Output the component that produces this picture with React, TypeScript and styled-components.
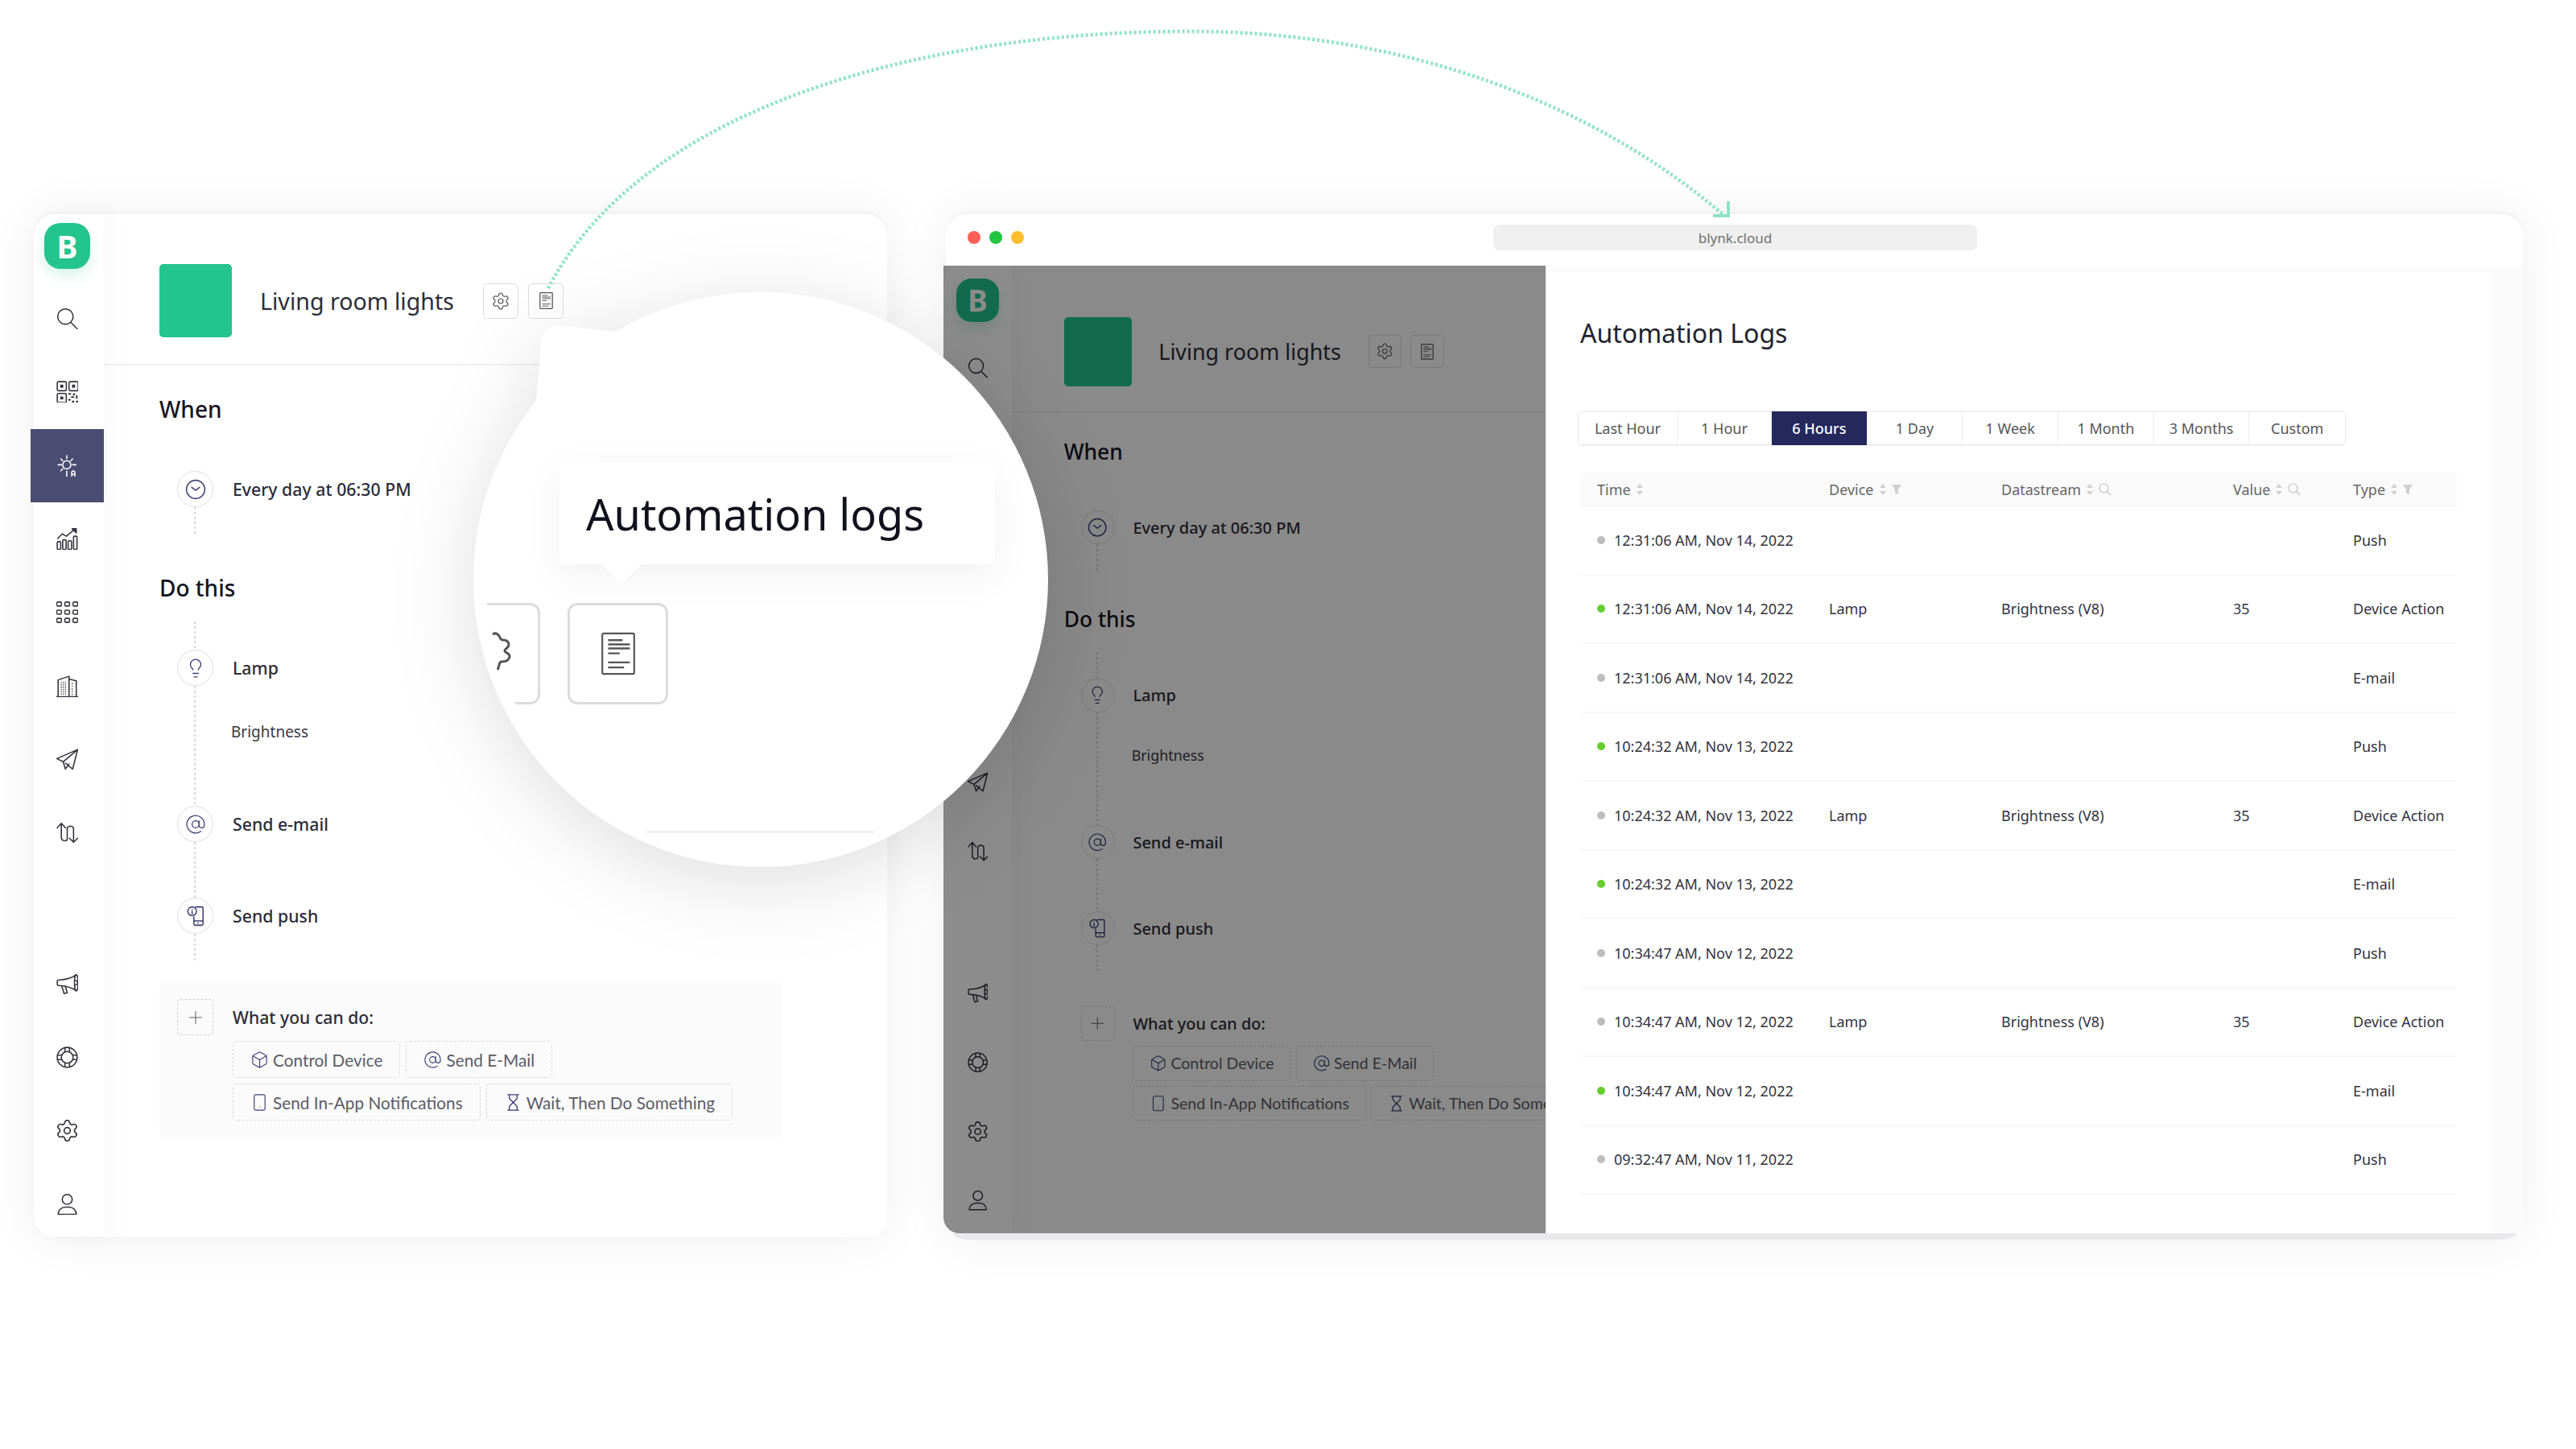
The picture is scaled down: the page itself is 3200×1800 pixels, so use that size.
import React from 'react'
import styled, { createGlobalStyle, ThemeProvider } from 'styled-components'
import { AtSign, Box, Hourglass, Lightbulb, Plus, Settings, Smartphone } from 'lucide-react'

type ViewTheme = { u: number; sideW: number; rowShift: number; logoTop: number; sideHead: number; headTop: number; bodyTop: number }

const fullView: ViewTheme = { u: 1, sideW: 87, rowShift: 4, logoTop: 11, sideHead: 84, headTop: 62, bodyTop: 37 }
const dimView: ViewTheme = { u: 0.94, sideW: 85, rowShift: 0, logoTop: 16, sideHead: 84, headTop: 64, bodyTop: 33 }

const u = (n: number) => ({ theme }: { theme: ViewTheme }) => `${n * theme.u}px`

const FONT = `"Noto Sans", "Open Sans", sans-serif`
const CHIP_FONT = `Lato, "Noto Sans", sans-serif`

const GlobalStyle = createGlobalStyle`
  html, body {
    margin: 0;
    background: #fff;
  }
  * {
    box-sizing: border-box;
  }
`

const Stage = styled.div`
  position: relative;
  width: 3200px;
  height: 1800px;
  padding: 266px 0 0 42px;
  display: flex;
  gap: 73px;
  overflow: hidden;
  font-family: ${FONT};
  color: #2c2c38;
`

const Card = styled.div`
  width: 1060px;
  height: 1270px;
  background: #fff;
  border-radius: 26px;
  box-shadow: 0 -3px 0 #f3f3f3, 0 0 60px rgba(0, 0, 0, 0.07);
`

// shared automation page, drawn twice at two scales
const View = styled.div`
  display: flex;
  height: 100%;
`

const Sidebar = styled.nav`
  flex: none;
  width: ${({ theme }) => theme.sideW}px;
  background: #fff;
  border-radius: 26px 0 0 26px;
  box-shadow: 8px 0 30px rgba(0, 0, 0, 0.03);
  display: flex;
  flex-direction: column;
  position: relative;
`

const LogoSlot = styled.div`
  flex: none;
  height: ${({ theme }) => theme.sideHead}px;
  padding-top: ${({ theme }) => theme.logoTop}px;
  margin-left: ${({ theme }) => -theme.rowShift}px;
  display: flex;
  justify-content: center;
`

const Logo = styled.div`
  width: ${u(57)};
  height: ${u(57)};
  border-radius: ${u(20)};
  background: #24c48e;
  box-shadow: 0 8px 16px rgba(36, 196, 142, 0.18);
  color: #fff;
  font-size: ${u(39)};
  font-weight: 700;
  display: flex;
  align-items: center;
  justify-content: center;
`

const NavRow = styled.div<{ $active?: boolean; $gap?: number }>`
  flex: none;
  height: ${u(91.3)};
  margin-left: ${({ theme }) => -theme.rowShift}px;
  margin-top: ${({ $gap, theme }) => ($gap || 0) * theme.u}px;
  background: ${({ $active }) => ($active ? '#4a4c72' : 'transparent')};
  color: ${({ $active }) => ($active ? '#fff' : '#33333c')};
  display: flex;
  align-items: center;
  justify-content: center;
  svg {
    width: ${u(27)};
    height: ${u(27)};
  }
`

const Main = styled.div`
  flex: 1;
  min-width: 0;
  overflow: hidden;
`

const PageHead = styled.header`
  display: flex;
  align-items: center;
  padding: ${({ theme }) => theme.headTop}px 0 ${u(33)} ${u(69)};
  border-bottom: 2px solid #f1f1f1;
`

const Swatch = styled.div`
  width: ${u(90)};
  height: ${u(91)};
  border-radius: ${u(5)};
  background: #24c48e;
`

const PageTitle = styled.h1`
  margin: 0 ${u(36)} 0 ${u(35)};
  font-size: ${u(28.6)};
  font-weight: 400;
  white-space: nowrap;
  color: #2c2c38;
`

const IconBtn = styled.div`
  width: ${u(44)};
  height: ${u(44)};
  margin-right: ${u(12)};
  border: 1px solid #dcdcdc;
  border-radius: ${u(5)};
  color: #555;
  display: flex;
  align-items: center;
  justify-content: center;
`

const GearMark = styled(Settings)`
  width: ${u(24)};
  height: ${u(24)};
`

const DocMark = styled.svg`
  width: ${u(17)};
  height: ${u(21)};
`

const Body = styled.div`
  padding: ${({ theme }) => theme.bodyTop}px 0 0 ${u(69)};
`

const SectionTitle = styled.h2<{ $top?: number; $bottom?: number }>`
  margin: ${({ $top, theme }) => ($top || 0) * theme.u}px 0 ${({ $bottom, theme }) => ($bottom || 0) * theme.u}px;
  height: ${u(34)};
  line-height: ${u(34)};
  font-size: ${u(28)};
  font-weight: 500;
  color: #15151f;
`

const Step = styled.div`
  height: ${u(45)};
  padding-left: ${u(22)};
  display: flex;
  align-items: center;
  gap: ${u(24)};
`

const StepIcon = styled.div`
  flex: none;
  width: ${u(45)};
  height: ${u(45)};
  border-radius: 50%;
  border: 1px solid #dedede;
  color: #3c3f75;
  display: flex;
  align-items: center;
  justify-content: center;
  svg {
    width: ${u(26)};
    height: ${u(26)};
  }
`

const StepLabel = styled.span`
  font-size: ${u(21.3)};
  font-weight: 500;
  color: #2c2c38;
  white-space: nowrap;
`

const Connector = styled.div<{ $h: number }>`
  width: 2px;
  height: ${({ $h, theme }) => $h * theme.u}px;
  margin-left: ${u(43)};
  background: repeating-linear-gradient(to bottom, #d6d6d6 0 3px, transparent 3px 6px);
`

const SubRow = styled.div`
  display: flex;
`

const SubLabel = styled.span`
  margin: ${u(43)} 0 0 ${u(44)};
  height: ${u(28)};
  line-height: ${u(28)};
  font-size: ${u(19)};
  color: #3a3a44;
`

const Panel = styled.section`
  width: ${u(774)};
  height: ${u(198)};
  margin-top: ${u(24)};
  padding: ${u(23)} 0 0 ${u(22)};
  border-radius: ${u(10)};
  background: #fbfbfb;
`

const PanelHead = styled.div`
  display: flex;
  align-items: center;
  gap: ${u(24)};
`

const PlusBox = styled.div`
  width: ${u(45)};
  height: ${u(45)};
  border: 1px dashed #cfcfcf;
  border-radius: ${u(4)};
  color: #666;
  display: flex;
  align-items: center;
  justify-content: center;
  svg {
    width: ${u(26)};
    height: ${u(26)};
  }
`

const PanelTitle = styled.span`
  font-size: ${u(21.2)};
  font-weight: 500;
  color: #2c2c38;
`

const ChipRow = styled.div`
  display: flex;
  gap: ${u(7)};
  margin: ${u(7)} 0 0 ${u(69)};
  &:first-of-type {
    margin-top: ${u(15)};
  }
`

const Chip = styled.div`
  flex: none;
  height: ${u(46)};
  padding: 0 ${u(21)};
  border: 1px dashed #d8d8d8;
  border-radius: ${u(5)};
  display: flex;
  align-items: center;
  gap: ${u(5)};
  font-family: ${CHIP_FONT};
  font-size: ${u(20.8)};
  color: #5c5c66;
  white-space: nowrap;
  svg {
    color: #3c3f75;
    width: ${u(23)};
    height: ${u(23)};
  }
`

// browser window
const BrowserCard = styled.div`
  width: 1959px;
  height: 1274px;
  background: linear-gradient(to bottom, #fbfbfb calc(100% - 8px), #e9e9eb calc(100% - 8px));
  border-radius: 26px;
  box-shadow: 0 -3px 0 #f3f3f3, 0 0 60px rgba(0, 0, 0, 0.07);
  display: flex;
  flex-direction: column;
`

const TitleBar = styled.div`
  height: 64px;
  flex: none;
  padding: 0 0 6px 27px;
  background: #fff;
  border-radius: 26px 26px 0 0;
  position: relative;
  display: flex;
  align-items: center;
`

const WinDot = styled.span<{ $c: string }>`
  width: 16px;
  height: 16px;
  margin-right: 11px;
  border-radius: 50%;
  background: ${({ $c }) => $c};
`

const UrlBar = styled.div`
  margin-left: 572px;
  width: 601px;
  height: 32px;
  border-radius: 8px;
  background: #efefef;
  color: #6f6f6f;
  font-size: 17px;
  display: flex;
  align-items: center;
  justify-content: center;
`

const BrowserBody = styled.div`
  height: 1202px;
  flex: none;
  display: flex;
`

const DimScreen = styled.div`
  position: relative;
  flex: none;
  width: 748px;
  margin-left: -3px;
  overflow: hidden;
  border-radius: 0 0 0 20px;
`

const DimOverlay = styled.div`
  position: absolute;
  inset: 0;
  background: rgba(0, 0, 0, 0.45);
`

const LogPanel = styled.div`
  flex: none;
  width: 1175px;
  padding: 54px 0 0 43px;
  background: #fff;
  border-top: 8px solid #fafafa;
`

const LogTitle = styled.h2`
  margin: 0 0 75px;
  height: 44px;
  line-height: 44px;
  font-size: 32px;
  font-weight: 400;
  color: #23232d;
`

const Tabs = styled.div`
  display: inline-flex;
  margin-left: -3px;
  height: 42px;
  border: 1px solid #e7e7e7;
  border-radius: 4px;
  box-shadow: 0 1px 2px rgba(0, 0, 0, 0.05);
`

const Tab = styled.div<{ $active?: boolean; $w: number }>`
  width: ${({ $w }) => $w}px;
  margin: ${({ $active }) => ($active ? '-1px 0' : '0')};
  background: ${({ $active }) => ($active ? '#24285c' : '#fff')};
  color: ${({ $active }) => ($active ? '#fff' : '#555')};
  font-weight: ${({ $active }) => ($active ? 500 : 400)};
  font-size: 18px;
  border-right: 1px solid #ececec;
  display: flex;
  align-items: center;
  justify-content: center;
  white-space: nowrap;
  &:last-child {
    border-right: 0;
  }
`

const Table = styled.div`
  width: 1089px;
  margin-top: 34px;
  font-size: 18px;
`

const cols = '288px 214px 288px 149px 129px'

const TableHead = styled.div`
  display: grid;
  grid-template-columns: ${cols};
  height: 42px;
  padding-left: 21px;
  align-items: center;
  background: #fafafa;
  border-bottom: 1px solid #f1f1f1;
  color: #666;
`

const HeadCell = styled.span`
  display: flex;
  align-items: center;
  gap: 6px;
  svg {
    flex: none;
  }
`

const LogRow = styled.div`
  display: grid;
  grid-template-columns: ${cols};
  height: 85.5px;
  padding-left: 21px;
  align-items: center;
  border-bottom: 2px solid #f7f7f7;
  color: #33333d;
  white-space: nowrap;
`

const TimeCell = styled.span`
  display: flex;
  align-items: center;
  gap: 11px;
`

const StatusDot = styled.span<{ $on?: boolean }>`
  width: 10px;
  height: 10px;
  border-radius: 50%;
  background: ${({ $on }) => ($on ? '#66cf2e' : '#bdbdbd')};
`

// magnifier that lies over both windows
const Lens = styled.div`
  position: absolute;
  left: 588px;
  top: 363px;
  width: 714px;
  height: 714px;
  filter: drop-shadow(0 18px 50px rgba(0, 0, 0, 0.13));
`

const LensDisc = styled.div`
  position: absolute;
  inset: 0;
  border-radius: 50%;
  background: #fff;
  overflow: hidden;
`

const LensTail = styled.svg`
  position: absolute;
  left: 70px;
  top: 36px;
`

const Bubble = styled.div`
  position: absolute;
  left: 107px;
  top: 211px;
  width: 541px;
  height: 127px;
  padding-left: 33px;
  border-radius: 6px;
  background: #fff;
  box-shadow: 0 14px 50px rgba(0, 0, 0, 0.06);
  font-size: 54px;
  color: #11111d;
  display: flex;
  align-items: center;
  &::after {
    content: '';
    position: absolute;
    left: 52px;
    bottom: -24px;
    border-left: 25px solid transparent;
    border-right: 25px solid transparent;
    border-top: 24px solid #fff;
  }
`

const BigBtn = styled.div`
  position: absolute;
  left: 117px;
  top: 386px;
  width: 125px;
  height: 126px;
  border: 3px solid #dcdcdc;
  border-radius: 12px;
  color: #555;
  display: flex;
  align-items: center;
  justify-content: center;
`

const CutBtn = styled.div`
  position: absolute;
  left: 17px;
  top: 386px;
  width: 66px;
  height: 126px;
  border: 3px solid #dcdcdc;
  border-left: 0;
  border-radius: 0 12px 12px 0;
  color: #555;
  clip-path: polygon(0 0, 100% 0, 100% 100%, 36px 100%, 0 60%);
`

const CutIcon = styled.svg`
  position: absolute;
  left: 5px;
  top: 33px;
`

const LensLine = styled.div`
  position: absolute;
  left: 215px;
  top: 669px;
  width: 283px;
  height: 3px;
  background: #f0f0f0;
`

const Arc = styled.svg`
  position: absolute;
  left: 0;
  top: 0;
  pointer-events: none;
`

const line = { fill: 'none', stroke: 'currentColor', strokeWidth: 1.4, strokeLinecap: 'round', strokeLinejoin: 'round' } as const

const SearchIcon = () => (
  <svg viewBox="0 0 24 24" {...line}>
    <circle cx="10" cy="10" r="8.500" />
    <path d="M16 16.500L23 23.500" />
  </svg>
)

const QrIcon = () => (
  <svg viewBox="0 0 24 24" {...line}>
    <rect x="1" y="1" width="10" height="10" rx="1.500" />
    <rect x="14" y="1" width="10" height="10" rx="1.500" />
    <rect x="1" y="14" width="10" height="10" rx="1.500" />
    <rect x="5" y="5" width="2" height="2" fill="currentColor" />
    <rect x="18" y="5" width="2" height="2" fill="currentColor" />
    <rect x="5" y="18" width="2" height="2" fill="currentColor" />
    <path d="M14 14.500h1.500M19 15h1M17 18h2M14 21h1M22.500 17v2M18 23h1M22.500 23h1" strokeWidth="1.800" />
  </svg>
)

const SunAutoIcon = () => (
  <svg viewBox="0 0 24 24" {...line}>
    <circle cx="11.500" cy="11" r="4.500" />
    <path d="M11.500 1v3M11.500 18v6M2 11h3.500M18 11h3.500M5 4.500l2 2M18 4.500l-2 2M5 17.500l2-2" />
    <path d="M17 24v-4.500a1.700 1.700 0 0 1 3.400 0V24M17 21.500h3.400" />
  </svg>
)

const ChartIcon = () => (
  <svg viewBox="0 0 24 24" {...line}>
    <rect x="1" y="15" width="3.800" height="8.500" rx="1" />
    <rect x="7" y="13" width="3.800" height="10.500" rx="1" />
    <rect x="13" y="14" width="3.800" height="9.500" rx="1" />
    <rect x="19" y="9" width="3.800" height="14.500" rx="1" />
    <path d="M1.500 11.500l5-5 4.500 2.500 9-7.500" />
    <path d="M17.500 0.800h4.500v4.500z" fill="currentColor" />
  </svg>
)

const GridIcon = () => (
  <svg viewBox="0 0 24 24" {...line}>
    {[3, 12, 21].map((y) =>
      [3, 12, 21].map((x) => <rect key={`${x}-${y}`} x={x - 2.6} y={y - 2.2} width="5.200" height="4.400" rx="1.300" />)
    )}
  </svg>
)

const BuildingIcon = () => (
  <svg viewBox="0 0 24 24" {...line}>
    <path d="M0.500 23.500h23M2 23.500V5L14 1v22.500M14 4l8 2v17.500" />
    <path d="M5 8h6M5 10.500h6M5 13h6M5 15.500h6M5 18h6M5 20.500h6M17 9h2M17 12h2M17 15h2M17 18h2M17 21h2" strokeDasharray="1 1.300" strokeLinecap="butt" />
  </svg>
)

const PlaneIcon = () => (
  <svg viewBox="0 0 24 24" {...line}>
    <path d="M23.500 1L0.500 11l7 3.500L23.500 1zM23.500 1L7.500 14.500l2.500 8 4-5.500M23.500 1L18 22.500 10 16" />
  </svg>
)

const SwapIcon = () => (
  <svg viewBox="0 0 24 24" {...line}>
    <path d="M1 6.500L5.500 1.500 10 6.500M5.500 1.500V17a3.800 3.800 0 0 0 6.500 2.700V7a3.800 3.800 0 0 1 7 0v15.500M14.500 18l4.500 4.500 4.500-4.500" />
  </svg>
)

const HornIcon = () => (
  <svg viewBox="0 0 24 24" {...line}>
    <path d="M22 1.500C18 5 12 7 3 7.500a1.500 1.500 0 0 0-2 1.500v3a1.500 1.500 0 0 0 2 1.500C12 14 18 16 22 19.500" />
    <ellipse cx="22" cy="10.500" rx="2" ry="9" />
    <path d="M21 8a2.500 2.500 0 0 1 0 5M6 14l2.500 8.500 3.500-1-2-7" />
  </svg>
)

const BuoyIcon = () => (
  <svg viewBox="0 0 24 24" {...line}>
    <circle cx="12" cy="12" r="11" />
    <circle cx="12" cy="12" r="6.500" />
    <path d="M9.500 1.300v4.700M14.500 1.300v4.700M9.500 18v4.700M14.500 18v4.700M1.300 9.500h4.700M1.300 14.500h4.700M18 9.500h4.700M18 14.500h4.700" />
  </svg>
)

const CogIcon = () => <Settings viewBox="1.500 1.500 21 21" strokeWidth={1.3} />

const UserIcon = () => (
  <svg viewBox="0 0 24 24" {...line}>
    <circle cx="12" cy="7" r="5.500" />
    <path d="M2 23.500c0-4.500 3.500-8 8-8h4c4.500 0 8 3.500 8 8z" />
  </svg>
)

const ClockIcon = () => (
  <svg viewBox="0 0 24 24" {...line}>
    <circle cx="12" cy="12" r="10.500" />
    <path d="M7.500 9.500L12 13l4.500-3.500" />
  </svg>
)

const PushIcon = () => (
  <svg viewBox="0 0 24 24" {...line}>
    <path d="M12 1.500h7a1.500 1.500 0 0 1 1.500 1.500v18a1.500 1.500 0 0 1-1.500 1.500h-7.500A1.500 1.500 0 0 1 10 21v-8" />
    <circle cx="8" cy="6.500" r="5" fill="#fff" />
    <path d="M8 4.500v0M8 6.500v3M14.500 20h.500M10 17.500h10" />
  </svg>
)

// document glyph: paragraph lines over a short pair
const DocPaths = () => (
  <>
    <rect x="1" y="1" width="22" height="28" rx="1" />
    <path d="M5 5.700h10M5 8.600h15M5 11.400h15M5 14.800h8M5 21h15M5 24.500h11" strokeWidth="1.300" />
  </>
)

const DocIcon = () => (
  <DocMark viewBox="0 0 24 30" fill="none" stroke="currentColor" strokeWidth="1.800">
    <DocPaths />
  </DocMark>
)

const SortMark = () => (
  <svg width="10" height="16" viewBox="0 0 10 16" fill="#cfcfcf">
    <path d="M5 1l4 5H1zM5 15l4-5H1z" />
  </svg>
)

const FunnelMark = () => (
  <svg width="12" height="14" viewBox="0 0 12 14" fill="#cfcfcf">
    <path d="M0 1h12L8 7v6l-4-1V7z" />
  </svg>
)

const LensMark = () => (
  <svg width="16" height="16" viewBox="0 0 16 16" fill="none" stroke="#bdbdbd" strokeWidth="1.100">
    <circle cx="6.500" cy="6.500" r="5.500" />
    <path d="M10.500 10.500L15 15" />
  </svg>
)

const topNav = [SearchIcon, QrIcon, SunAutoIcon, ChartIcon, GridIcon, BuildingIcon, PlaneIcon, SwapIcon]
const bottomNav = [HornIcon, BuoyIcon, CogIcon, UserIcon]

const AutomationView = () => (
  <View>
    <Sidebar>
      <LogoSlot>
        <Logo>B</Logo>
      </LogoSlot>
      {topNav.map((Icon, i) => (
        <NavRow key={i} $active={i === 2}>
          <Icon />
        </NavRow>
      ))}
      {bottomNav.map((Icon, i) => (
        <NavRow key={i} $gap={i === 0 ? 96 : 0}>
          <Icon />
        </NavRow>
      ))}
    </Sidebar>
    <Main>
      <PageHead>
        <Swatch />
        <PageTitle>Living room lights</PageTitle>
        <IconBtn>
          <GearMark strokeWidth={1.2} />
        </IconBtn>
        <IconBtn>
          <DocIcon />
        </IconBtn>
      </PageHead>
      <Body>
        <SectionTitle $bottom={60}>When</SectionTitle>
        <Step>
          <StepIcon>
            <ClockIcon />
          </StepIcon>
          <StepLabel>Every day at 06:30 PM</StepLabel>
        </Step>
        <Connector $h={36} />
        <SectionTitle $top={47} $bottom={25}>
          Do this
        </SectionTitle>
        <Connector $h={35} />
        <Step>
          <StepIcon>
            <Lightbulb strokeWidth={1.2} />
          </StepIcon>
          <StepLabel>Lamp</StepLabel>
        </Step>
        <SubRow>
          <Connector $h={149} />
          <SubLabel>Brightness</SubLabel>
        </SubRow>
        <Step>
          <StepIcon>
            <AtSign strokeWidth={1.2} />
          </StepIcon>
          <StepLabel>Send e-mail</StepLabel>
        </Step>
        <Connector $h={69} />
        <Step>
          <StepIcon>
            <PushIcon />
          </StepIcon>
          <StepLabel>Send push</StepLabel>
        </Step>
        <Connector $h={34} />
        <Panel>
          <PanelHead>
            <PlusBox>
              <Plus strokeWidth={1} />
            </PlusBox>
            <PanelTitle>What you can do:</PanelTitle>
          </PanelHead>
          <ChipRow>
            <Chip>
              <Box strokeWidth={1.2} />
              Control Device
            </Chip>
            <Chip>
              <AtSign strokeWidth={1.2} />
              Send E-Mail
            </Chip>
          </ChipRow>
          <ChipRow>
            <Chip>
              <Smartphone strokeWidth={1.2} />
              Send In-App Notifications
            </Chip>
            <Chip>
              <Hourglass strokeWidth={1.4} />
              Wait, Then Do Something
            </Chip>
          </ChipRow>
        </Panel>
      </Body>
    </Main>
  </View>
)

type Log = { time: string; on?: boolean; device?: string; stream?: string; value?: string; type: string }

const logs: Log[] = [
  { time: '12:31:06 AM, Nov 14, 2022', type: 'Push' },
  { time: '12:31:06 AM, Nov 14, 2022', on: true, device: 'Lamp', stream: 'Brightness (V8)', value: '35', type: 'Device Action' },
  { time: '12:31:06 AM, Nov 14, 2022', type: 'E-mail' },
  { time: '10:24:32 AM, Nov 13, 2022', on: true, type: 'Push' },
  { time: '10:24:32 AM, Nov 13, 2022', device: 'Lamp', stream: 'Brightness (V8)', value: '35', type: 'Device Action' },
  { time: '10:24:32 AM, Nov 13, 2022', on: true, type: 'E-mail' },
  { time: '10:34:47 AM, Nov 12, 2022', type: 'Push' },
  { time: '10:34:47 AM, Nov 12, 2022', device: 'Lamp', stream: 'Brightness (V8)', value: '35', type: 'Device Action' },
  { time: '10:34:47 AM, Nov 12, 2022', on: true, type: 'E-mail' },
  { time: '09:32:47 AM, Nov 11, 2022', type: 'Push' },
]

const ranges = [
  { label: 'Last Hour', w: 123 },
  { label: '1 Hour', w: 117 },
  { label: '6 Hours', w: 118.7 },
  { label: '1 Day', w: 118.7 },
  { label: '1 Week', w: 118.7 },
  { label: '1 Month', w: 118.7 },
  { label: '3 Months', w: 118.7 },
  { label: 'Custom', w: 118.7 },
]

const App = () => (
  <Stage>
    <GlobalStyle />
    <Card>
      <ThemeProvider theme={fullView}>
        <AutomationView />
      </ThemeProvider>
    </Card>
    <BrowserCard>
      <TitleBar>
        <WinDot $c="#ff5f57" />
        <WinDot $c="#21c53e" />
        <WinDot $c="#ffbd2e" />
        <UrlBar>blynk.cloud</UrlBar>
      </TitleBar>
      <BrowserBody>
        <DimScreen>
          <ThemeProvider theme={dimView}>
            <AutomationView />
          </ThemeProvider>
          <DimOverlay />
        </DimScreen>
        <LogPanel>
          <LogTitle>Automation Logs</LogTitle>
          <Tabs>
            {ranges.map((r) => (
              <Tab key={r.label} $active={r.label === '6 Hours'} $w={r.w}>
                {r.label}
              </Tab>
            ))}
          </Tabs>
          <Table>
            <TableHead>
              <HeadCell>
                Time <SortMark />
              </HeadCell>
              <HeadCell>
                Device <SortMark /> <FunnelMark />
              </HeadCell>
              <HeadCell>
                Datastream <SortMark /> <LensMark />
              </HeadCell>
              <HeadCell>
                Value <SortMark /> <LensMark />
              </HeadCell>
              <HeadCell>
                Type <SortMark /> <FunnelMark />
              </HeadCell>
            </TableHead>
            {logs.map((log, i) => (
              <LogRow key={i}>
                <TimeCell>
                  <StatusDot $on={log.on} />
                  {log.time}
                </TimeCell>
                <span>{log.device}</span>
                <span>{log.stream}</span>
                <span>{log.value}</span>
                <span>{log.type}</span>
              </LogRow>
            ))}
          </Table>
        </LogPanel>
      </BrowserBody>
    </BrowserCard>
    <Lens>
      <LensTail width="140" height="120" viewBox="0 0 140 120">
        <path d="M8 100L14 28Q16 6 40 6L110 13L140 120Z" fill="#fff" />
      </LensTail>
      <LensDisc>
        <Bubble>Automation logs</Bubble>
        <CutBtn>
          <CutIcon width="34" height="52" viewBox="0 0 34 52" fill="none" stroke="currentColor" strokeWidth="3">
            <path d="M2 3c3-2 6-1 8 2s1 5 5 5 7 2 7 6-4 4-5 7 7 3 6 8-6 6-10 6-2 6-5 10" />
          </CutIcon>
        </CutBtn>
        <BigBtn>
          <svg width="44" height="54" viewBox="0 0 24 30" fill="none" stroke="currentColor" strokeWidth="1.200">
            <DocPaths />
          </svg>
        </BigBtn>
        <LensLine />
      </LensDisc>
    </Lens>
    <Arc width="3200" height="1800" viewBox="0 0 3200 1800">
      <path d="M681 358C800 130 1150 39 1477 39C1750 39 1980 130 2140 266" fill="none" stroke="#8fe3c6" strokeWidth="4.500" strokeDasharray="3 3" />
      <path d="M2147 250V268H2128" fill="none" stroke="#8fe3c6" strokeWidth="4" />
    </Arc>
  </Stage>
)

export default App
